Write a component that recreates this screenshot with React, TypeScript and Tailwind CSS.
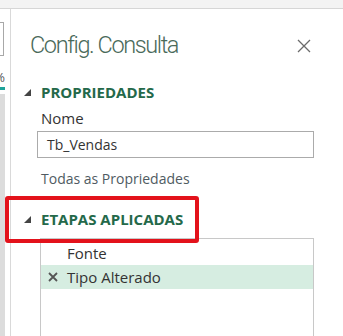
import React from "react";

const font = { fontFamily: '"Open Sans", "Liberation Sans", sans-serif' };

function Tri() {
  return (
    <svg width="7" height="7" viewBox="0 0 7 7" className="shrink-0">
      <polygon points="7,0 7,7 0,7" fill="#444" />
    </svg>
  );
}

export default function App() {
  return (
    <div
      className="relative w-[343px] h-[336px] overflow-hidden bg-white flex flex-col"
      style={font}
    >
      <div className="h-[9px] shrink-0 bg-[#f3f3f3] border-b border-[#d6d6d6]" />
      <div className="flex flex-1 min-h-0">
        {/* left cropped sidebar */}
        <div className="w-[11px] shrink-0 border-r border-[#d9d9d9] flex flex-col">
          <div className="mt-[13px] h-[34px] w-[4px] border-y border-r border-[#a8a8a8] bg-white" />
          <div className="mt-[12px] h-[18px] w-[5px] overflow-hidden text-[13px] leading-[18px] text-[#555] relative">
            <span className="absolute right-0">%</span>
          </div>
          <div className="mt-[1px] h-[3px] w-[5px] bg-[#1fa39a]" />
          <div className="mt-[4px] flex-1 w-[5px] bg-[#dcdcdc]" />
        </div>
        {/* main panel */}
        <div className="flex-1 flex flex-col pl-[13px] pr-[29px]">
          <div className="mt-[17px] h-[40px] flex items-center justify-between pl-[6px]">
            <span
              className="text-[23.5px] font-light text-[#4a6a5a] leading-none tracking-[-1.4px]"
              style={{ fontFamily: 'Roboto, "Open Sans", sans-serif' }}
            >
              Config. Consulta
            </span>
            <svg width="14" height="14" viewBox="0 0 14 14" className="mr-[3px]">
              <path d="M1 1 L13 13 M13 1 L1 13" stroke="#6b6b6b" strokeWidth="1.3" />
            </svg>
          </div>
          <div className="mt-[16px] h-[20px] flex items-center">
            <Tri />
            <span className="ml-[10px] text-[15px] font-bold text-[#24694a] leading-none">
              PROPRIEDADES
            </span>
          </div>
          <div className="mt-[6px] h-[20px] flex items-center pl-[17px] text-[15px] text-[#333]">
            Nome
          </div>
          <div className="mt-[3px] ml-[13px] h-[27px] border border-[#ababab] flex items-center pl-[9px] text-[14px] text-[#333]">
            Tb_Vendas
          </div>
          <div className="mt-[10px] h-[20px] flex items-center pl-[17px] text-[14px] text-[#4f5b62]">
            Todas as Propriedades
          </div>
          <div className="mt-[21px] h-[20px] flex items-center">
            <Tri />
            <span className="ml-[10px] text-[15px] font-bold text-[#24694a] leading-none">
              ETAPAS APLICADAS
            </span>
          </div>
          <div className="mt-[9px] ml-[16px] flex-1 border-x border-t border-[#c8c8c8] pt-[2px] flex flex-col">
            <div className="h-[24px] flex items-center pl-[26px] text-[15px] text-[#333]">
              Fonte
            </div>
            <div className="h-[24px] flex items-center bg-[#d6ede1] text-[15px] text-[#333]">
              <span className="w-[26px] pl-[7px] flex items-center">
                <svg width="10" height="10" viewBox="0 0 10 10">
                  <path d="M1 1 L9 9 M9 1 L1 9" stroke="#555" strokeWidth="1.8" />
                </svg>
              </span>
              Tipo Alterado
            </div>
          </div>
        </div>
      </div>
      {/* red annotation box */}
      <div className="absolute left-[5px] top-[196px] w-[194px] h-[47px] border-[4px] border-[#e3121b] rounded-[3px]" />
    </div>
  );
}
